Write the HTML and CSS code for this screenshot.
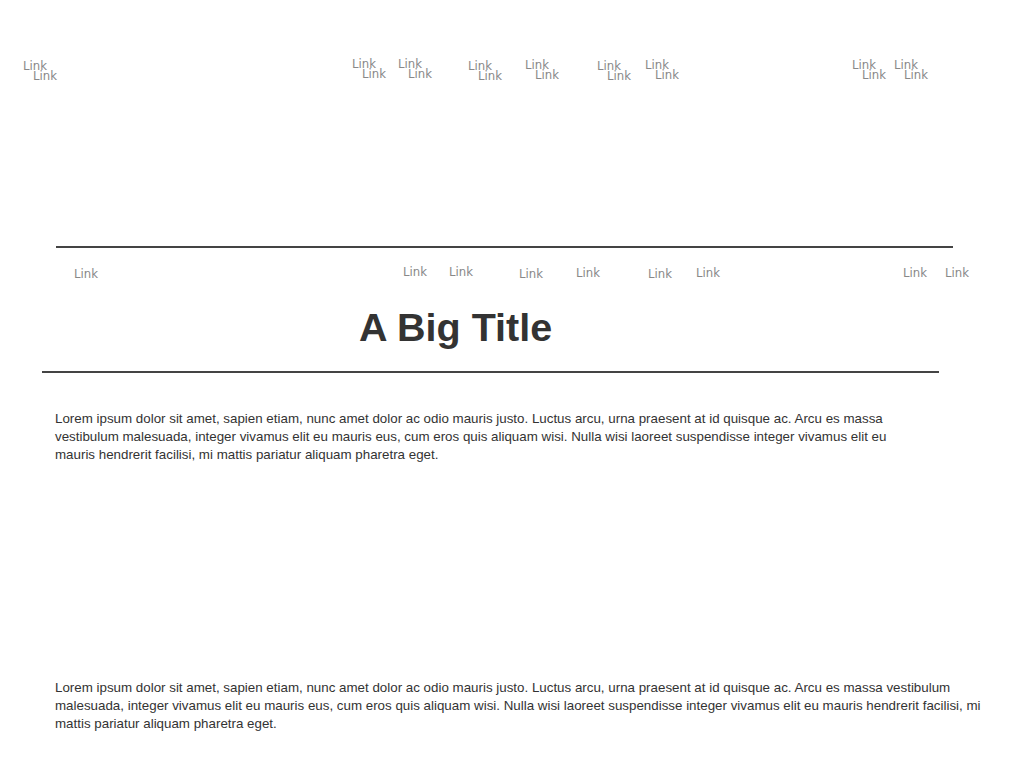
FILE: index.html
```html
<!DOCTYPE html>
<html lang="en">
<head>
<meta charset="utf-8">
<title>A Big Title</title>
<link rel="stylesheet" href="styles.css">
</head>
<body>
<header class="top-links">
  <div class="pair d2"><a href="#">Link</a><a class="sub" href="#">Link</a></div>
  <div class="pair"><a href="#">Link</a><a class="sub" href="#">Link</a></div>
  <div class="pair"><a href="#">Link</a><a class="sub" href="#">Link</a></div>
  <div class="pair d2"><a href="#">Link</a><a class="sub" href="#">Link</a></div>
  <div class="pair d1"><a href="#">Link</a><a class="sub" href="#">Link</a></div>
  <div class="pair d2"><a href="#">Link</a><a class="sub" href="#">Link</a></div>
  <div class="pair d1"><a href="#">Link</a><a class="sub" href="#">Link</a></div>
  <div class="pair d1"><a href="#">Link</a><a class="sub" href="#">Link</a></div>
  <div class="pair d1"><a href="#">Link</a><a class="sub" href="#">Link</a></div>
</header>

<section class="masthead">
  <div class="rule"></div>
  <nav class="nav-links">
    <a class="d2" href="#">Link</a>
    <a href="#">Link</a>
    <a href="#">Link</a>
    <a class="d2" href="#">Link</a>
    <a class="d1" href="#">Link</a>
    <a class="d2" href="#">Link</a>
    <a class="d1" href="#">Link</a>
    <a class="d1" href="#">Link</a>
    <a class="d1" href="#">Link</a>
  </nav>
  <h1 class="title">A Big Title</h1>
</section>
<div class="rule rule-bottom"></div>

<p class="para para-1">Lorem ipsum dolor sit amet, sapien etiam, nunc amet dolor ac odio mauris justo. Luctus arcu, urna praesent at id quisque ac. Arcu es massa vestibulum malesuada, integer vivamus elit eu mauris eus, cum eros quis aliquam wisi. Nulla wisi laoreet suspendisse integer vivamus elit eu mauris hendrerit facilisi, mi mattis pariatur aliquam pharetra eget.</p>

<p class="para para-2">Lorem ipsum dolor sit amet, sapien etiam, nunc amet dolor ac odio mauris justo. Luctus arcu, urna praesent at id quisque ac. Arcu es massa vestibulum malesuada, integer vivamus elit eu mauris eus, cum eros quis aliquam wisi. Nulla wisi laoreet suspendisse integer vivamus elit eu mauris hendrerit facilisi, mi mattis pariatur aliquam pharetra eget.</p>
</body>
</html>
```
FILE: styles.css
```css
html, body {
  margin: 0;
  padding: 0;
  background: #fff;
}

body {
  font-family: "Liberation Sans", Arial, sans-serif;
  color: #333;
}

a {
  font-family: "DejaVu Sans Condensed", "DejaVu Sans", sans-serif;
  font-size: 13px;
  line-height: 15px;
  color: #888;
  text-decoration: none;
}

.d1 { margin-top: 1px; }
.d2 { margin-top: 2px; }

/* top row of overlapping link pairs */
.top-links {
  display: grid;
  grid-template-columns: 329px 46px 70px 57px 72px 48px 207px 42px auto;
  align-items: start;
  height: 190px;
  padding: 56px 0 0 23px;
}

.pair {
  display: flex;
  flex-direction: column;
  align-items: flex-start;
}

.pair .sub {
  margin: -5px 0 0 10px;
}

/* masthead */
.masthead {
  margin-left: 56px;
}

.rule {
  width: 897px;
  height: 2px;
  background: #444;
}

.nav-links {
  display: grid;
  grid-template-columns: 329px 46px 70px 57px 72px 48px 207px 42px auto;
  align-items: start;
  height: 17px;
  padding: 16px 0 0 18px;
}

.title {
  margin: 23px 0 0 0;
  padding-left: 303px;
  font-size: 39.5px;
  line-height: 46px;
  font-weight: bold;
  color: #333;
}

.rule-bottom {
  margin: 21px 0 0 42px;
}

.para {
  margin: 0 0 0 55px;
  font-size: 13.35px;
  line-height: 18px;
  color: #333;
}

.para-1 {
  margin-top: 37px;
  width: 840px;
}

.para-2 {
  margin-top: 215px;
  width: 945px;
}
```
